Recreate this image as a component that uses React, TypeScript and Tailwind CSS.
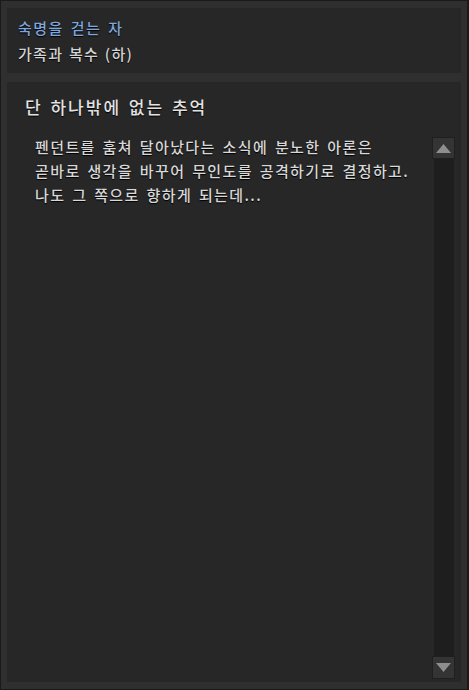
import React from "react";

const font = { fontFamily: '"Noto Sans CJK KR", "Noto Sans", sans-serif' };

export default function App() {
  return (
    <div className="w-[469px] h-[690px] bg-[#1a1a1a] pt-[1px] pl-[1px] pr-[2px] pb-[1px]" style={font}>
      <div className="h-full bg-[#2f2f2f] px-[6px] pt-[7px] pb-[7px] flex flex-col gap-[9px]">
        <div className="h-[65px] bg-[#272727] pl-[11px] pt-[9px] flex flex-col">
          <div className="text-[15px] leading-[22px] font-medium tracking-[1.5px] [word-spacing:2px] text-[#7ea7df] [text-shadow:0_1px_1px_#000]">숙명을 걷는 자</div>
          <div className="text-[15px] leading-[22px] font-medium tracking-[1.3px] [word-spacing:1px] mt-[4px] text-[#d4d4d4] [text-shadow:0_1px_1px_#000]">가족과 복수 (하)</div>
        </div>
        <div className="flex-1 bg-[#272727] flex flex-col min-h-0">
          <div className="pl-[18px] pt-[12px] text-[17px] leading-[26px] font-medium tracking-[2px] [word-spacing:2px] text-[#e2e2e2] [text-shadow:0_1px_1px_#000]">단 하나밖에 없는 추억</div>
          <div className="flex flex-1 min-h-0 mt-[17px] pb-[3px]">
            <div className="flex-1 pl-[28px] -mt-[2px] text-[15px] leading-[24px] font-medium tracking-[1.4px] [word-spacing:2px] text-[#d8d8d8] [text-shadow:0_1px_1px_#000] whitespace-nowrap">
              <div>펜던트를 훔쳐 달아났다는 소식에 분노한 아론은</div>
              <div>곧바로 생각을 바꾸어 무인도를 공격하기로 결정하고.</div>
              <div>나도 그 쪽으로 향하게 되는데...</div>
            </div>
            <div className="w-[23px] mr-[6px] flex flex-col items-center">
              <div className="w-[23px] h-[22px] bg-[#343434] border border-[#1f1f1f] flex items-center justify-center">
                <svg width="15" height="9" viewBox="0 0 15 9"><polygon points="7.5,0 15,9 0,9" fill="#8e8e8e" /></svg>
              </div>
              <div className="w-[20px] flex-1 bg-[#1e1e1e]" />
              <div className="w-[23px] h-[23px] bg-[#343434] border border-[#1f1f1f] flex items-center justify-center">
                <svg width="15" height="9" viewBox="0 0 15 9"><polygon points="0,0 15,0 7.5,9" fill="#8e8e8e" /></svg>
              </div>
            </div>
          </div>
        </div>
      </div>
    </div>
  );
}
